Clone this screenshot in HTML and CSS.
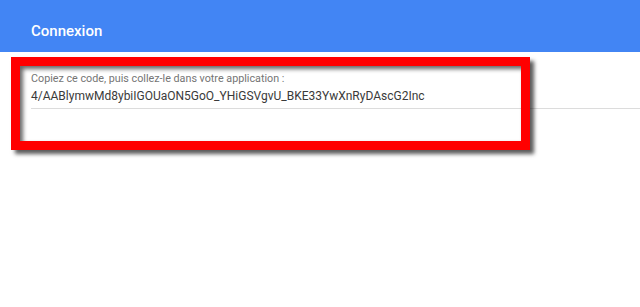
FILE: index.html
```html
<!DOCTYPE html>
<html lang="fr">
<head>
<meta charset="UTF-8" />
<meta name="viewport" content="width=device-width, initial-scale=1" />
<title>Connexion</title>
<link rel="stylesheet" href="styles.css">
</head>
<body>

<header class="topbar">
  <h1>Connexion</h1>
</header>

<main class="content">
  <div class="field">
    <label class="field-label">Copiez ce code, puis collez-le dans votre application :</label>
    <div class="field-value">4/AABlymwMd8ybiIGOUaON5GoO_YHiGSVgvU_BKE33YwXnRyDAscG2Inc</div>
  </div>
</main>

<!-- annotation drawn over the screenshot -->
<div class="highlight"></div>

</body>
</html>
```

FILE: styles.css
```css
body {
  margin: 0;
  font-family: Roboto, 'Liberation Sans', sans-serif;
  background: #fff;
  position: relative;
  height: 307px;
  overflow: hidden;
}
.topbar {
  background: #4285f4;
  height: 52px;
  box-sizing: border-box;
  padding: 22px 0 0 31px;
}
.topbar h1 {
  margin: 0;
  color: #fff;
  font-size: 15px;
  font-weight: 500;
  line-height: 18px;
}
.content {
  padding: 21px 0 0 31px;
}
.field {
  border-bottom: 1px solid #dcdcdc;
  padding-bottom: 5px;
}
.field-label {
  display: block;
  font-size: 10.75px;
  color: #757575;
  line-height: 12px;
}
.field-value {
  font-size: 12px;
  color: #3a3a3a;
  line-height: 14px;
  margin-top: 4px;
}
.highlight {
  position: absolute;
  left: 11px;
  top: 57px;
  width: 501px;
  height: 75px;
  border: 9px solid #ff0000;
  box-shadow: 4px 4px 4px rgba(0,0,0,0.65), inset 3px 3px 4px rgba(0,0,0,0.6);
}
```
